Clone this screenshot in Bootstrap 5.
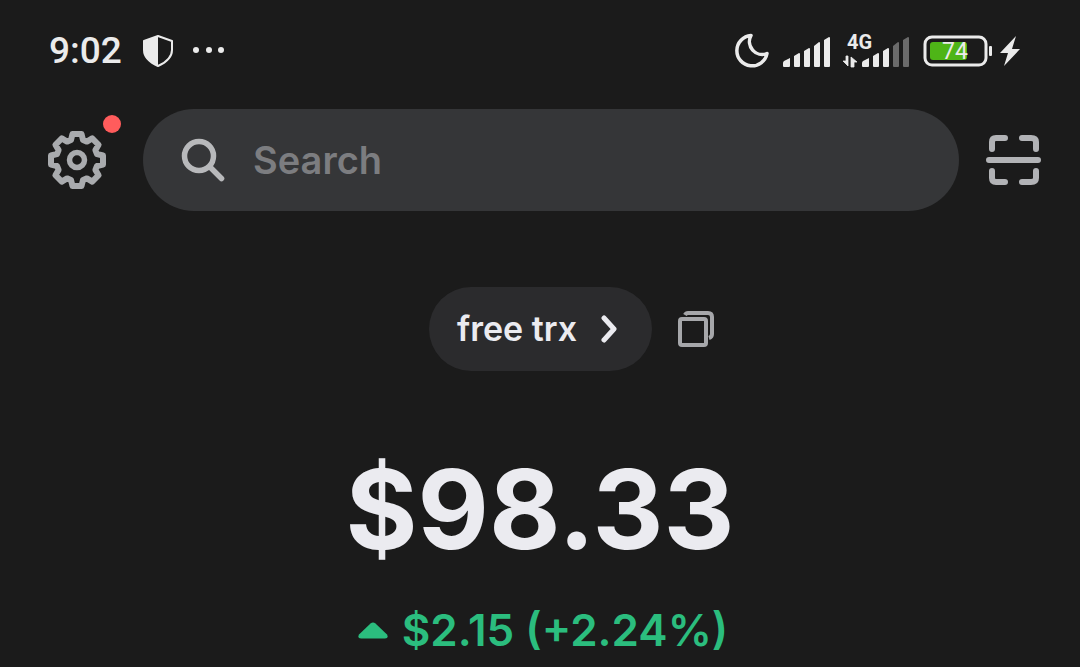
<!DOCTYPE html>
<html lang="en">
<head>
<meta charset="utf-8">
<meta name="viewport" content="width=device-width, initial-scale=1">
<title>Wallet</title>
<link href="https://cdn.jsdelivr.net/npm/bootstrap@5.3.0/dist/css/bootstrap.min.css" rel="stylesheet">
<style>
  body { background: #1b1b1b; color: #ebebf0; font-family: Inter, "Liberation Sans", sans-serif; overflow-x: hidden; }
  svg { display: block; flex: none; }
  .status-bar { height: 102px; padding: 0 60px 0 49px; color: #ebebeb; font-family: Roboto, "Liberation Sans", sans-serif; }
  .clock { font-size: 37px; line-height: 42px; font-weight: 500; }
  .battery-level { font: 400 23px/24px Roboto, sans-serif; }
  .network { font: 700 20px/24px Roboto, sans-serif; }
  .app-header { padding: 7px 39px 0 48px; gap: 27px; color: #b2b3b6; }
  .settings-btn { margin-right: 10px; }
  .alert-dot { width: 18px; height: 18px; top: -16px; right: -15px; background: #ff5c5c; }
  .search-box { height: 102px; padding: 0 38px; gap: 28px; background: #353638; }
  .search-box .form-control { font-size: 38px; line-height: 46px; font-weight: 600; color: #ebebf0; }
  .search-box .form-control::placeholder { color: #7c7d80; opacity: 1; }
  .wallet-row { margin-top: 76px; gap: 26px; padding-left: 63px; }
  .wallet-btn { height: 84px; padding: 0 35px 0 28px; gap: 24px; background: #2b2b2d; color: #ebebf0; font-size: 34px; line-height: 40px; font-weight: 600; }
  .balance { margin-top: 72px; font-size: 110px; line-height: 132px; font-weight: 700; }
  .change { margin-top: 27px; padding-left: 6px; gap: 14px; font-size: 44px; line-height: 56px; font-weight: 600; color: #2bbd7e; }
</style>
</head>
<body>
<div class="status-bar d-flex align-items-center justify-content-between">
  <div class="d-flex align-items-center">
    <span class="clock">9:02</span>
    <svg class="ms-3" width="88" height="34" viewBox="0 0 88 34" fill="currentColor" aria-hidden="true">
      <path d="M20 2 34 7v9c0 7-5 12-14 16C11 28 6 23 6 16V7Z" fill="none" stroke="currentColor" stroke-width="2" stroke-linejoin="round"/>
      <path d="M20 2 6 7v9c0 7 5 12 14 16Z"/>
      <circle cx="58" cy="16" r="3"/><circle cx="71" cy="16" r="3"/><circle cx="83" cy="16" r="3"/>
    </svg>
  </div>
  <svg width="286" height="40" viewBox="0 0 286 40" fill="currentColor" role="img" aria-label="Signal and battery status">
    <path d="M17 4.500A15.200 15.200 0 1 0 33 22.500A12.800 12.800 0 0 1 17 4.500Z" fill="none" stroke="currentColor" stroke-width="3.500" stroke-linejoin="round"/>
    <path d="M49 35v-3q0-1 1-2l6-3v8q0 1-1 1h-5q-1 0-1-1ZM60 35V25l5-3q1 0 1 1v12q0 1-1 1h-4q-1 0-1-1ZM70 35V20l5-3q1 0 1 1v17q0 1-1 1h-4q-1 0-1-1ZM80 35V15l5-4q1 0 1 1v23q0 1-1 1h-4q-1 0-1-1ZM90 35V9l5-3q1 0 1 1v28q0 1-1 1h-4q-1 0-1-1Z"/>
    <path d="M128 35v-3q0-1 1-2l6-3v8q0 1-1 1h-5q-1 0-1-1ZM139 35V25l5-3q1 0 1 1v12q0 1-1 1h-4q-1 0-1-1ZM149 35V20l5-3q1 0 1 1v17q0 1-1 1h-4q-1 0-1-1Z"/>
    <path fill="#6b6b6b" d="M159 35V15l5-4q1 0 1 1v23q0 1-1 1h-4q-1 0-1-1ZM169 35V9l5-3q1 0 1 1v28q0 1-1 1h-4q-1 0-1-1Z"/>
    <path d="M112 25h2v10l-5-5h3ZM117 36V26l6 5h-3v5Z" stroke="currentColor" stroke-width=".8"/>
    <text class="network" x="113" y="18">4G</text>
    <rect x="191" y="6" width="61" height="28" rx="7" fill="none" stroke="currentColor" stroke-width="3"/>
    <rect x="196" y="11" width="37" height="18" rx="3" fill="#4eb517"/>
    <rect x="255" y="15" width="3" height="10" rx="1"/>
    <text class="battery-level" x="208" y="28">74</text>
    <path d="M282 5 266 22h8l-4 13 16-17h-8Z"/>
  </svg>
</div>

<header class="app-header d-flex align-items-center">
  <button type="button" class="settings-btn btn border-0 p-0 position-relative" aria-label="Settings">
    <svg width="58" height="58" viewBox="-29 -29 58 58" fill="none" stroke="#a9abae" stroke-width="6" stroke-linejoin="round">
      <path d="M-6-20-4.500-26H4.500L6-20 9.900-18.400 15.200-21.600 21.600-15.200 18.400-9.900 20-6 26-4.500V4.500L20 6 18.400 9.900 21.600 15.200 15.200 21.600 9.900 18.400 6 20 4.500 26H-4.500L-6 20-9.900 18.400-15.200 21.600-21.600 15.200-18.400 9.900-20 6-26 4.500V-4.500L-20-6-18.400-9.900-21.600-15.200-15.200-21.600-9.900-18.400Z"/>
      <circle r="7.500" stroke-width="5.500"/>
    </svg>
    <span class="alert-dot position-absolute rounded-circle"></span>
  </button>
  <label class="search-box d-flex align-items-center flex-grow-1 rounded-pill">
    <svg width="44" height="44" viewBox="0 0 44 44" fill="none" stroke="#b8b9bb" stroke-width="5.500" stroke-linecap="round" aria-hidden="true">
      <circle cx="18" cy="18" r="14.500"/><path d="m29 29 11.500 11.500"/>
    </svg>
    <input type="text" class="form-control border-0 bg-transparent shadow-none p-0" placeholder="Search" aria-label="Search">
  </label>
  <button type="button" class="btn border-0 p-0" aria-label="Scan code">
    <svg width="55" height="50" viewBox="0 0 55 50" fill="none" stroke="#b2b3b6" stroke-width="6" stroke-linecap="round">
      <path d="M6 14V7q0-4 4-4h9M36 3h9q5 0 5 4v7M50 36v7q0 4-5 4h-9M19 47h-9q-4 0-4-4v-7M3 25h49"/>
    </svg>
  </button>
</header>

<main>
  <div class="wallet-row d-flex align-items-center justify-content-center">
    <button type="button" class="wallet-btn btn border-0 rounded-pill d-flex align-items-center">
      <span>free trx</span>
      <svg width="16" height="28" viewBox="0 0 16 28" fill="none" stroke="currentColor" stroke-width="5" stroke-linecap="round" stroke-linejoin="round" aria-hidden="true"><path d="m3 3 10 11L3 25"/></svg>
    </button>
    <button type="button" class="btn border-0 p-0" aria-label="Copy address">
      <svg width="36" height="36" viewBox="0 0 36 36" fill="none" stroke="#a6a7aa" stroke-width="4">
        <rect x="2" y="8" width="26" height="26" rx="2"/>
        <path d="M7 4q1-2 3-2h20q4 0 4 4v17q0 3-3 4" stroke-width="4"/>
      </svg>
    </button>
  </div>
  <h1 class="balance text-center mb-0">$98.33</h1>
  <div class="change d-flex align-items-center justify-content-center">
    <svg width="30" height="18" viewBox="0 0 30 18" fill="currentColor" aria-hidden="true"><path d="M12.500 2.500q2.500-2 5 0L29 13.500Q31 17.500 27 17.500H3Q-1 17.500 1 13.500Z"/></svg>
    <span>$2.15 (+2.24%)</span>
  </div>
</main>
<script src="https://cdn.jsdelivr.net/npm/bootstrap@5.3.0/dist/js/bootstrap.bundle.min.js"></script>
</body>
</html>
